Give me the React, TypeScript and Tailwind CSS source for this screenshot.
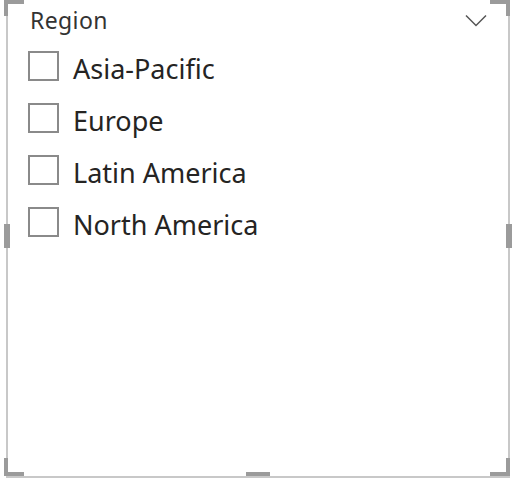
const REGIONS = ["Asia-Pacific", "Europe", "Latin America", "North America"];

/* resize handles that sit on top of the visual's frame */
function Handles() {
  const h = "absolute bg-[#9b9b9b]";
  return (
    <>
      <div className={`${h} left-[-4px] top-[-2px] w-[20px] h-[6px]`} />
      <div className={`${h} left-[-4px] top-[-2px] w-[4px] h-[18px]`} />
      <div className={`${h} right-[-2px] top-[-2px] w-[20px] h-[6px]`} />
      <div className={`${h} right-[-2px] top-[-2px] w-[4px] h-[18px]`} />
      <div className={`${h} left-[-4px] bottom-[0px] w-[20px] h-[4px]`} />
      <div className={`${h} left-[-4px] bottom-[0px] w-[4px] h-[18px]`} />
      <div className={`${h} right-[-2px] bottom-[0px] w-[20px] h-[4px]`} />
      <div className={`${h} right-[-2px] bottom-[0px] w-[4px] h-[18px]`} />
      <div className={`${h} left-[-4px] top-[224px] w-[6px] h-[24px]`} />
      <div className={`${h} right-[-4px] top-[224px] w-[6px] h-[24px]`} />
      <div className={`${h} left-[238px] bottom-[0px] w-[24px] h-[4px]`} />
    </>
  );
}

export default function App() {
  return (
    <div className="w-[516px] h-[478px] bg-white overflow-hidden">
      <div
        className="relative mx-[6px] mt-[-2px] h-[480px] w-[504px] border-2 border-[#c8c8c8] text-[#252423]"
        style={{ fontFamily: '"Noto Sans", "Open Sans", sans-serif' }}
      >
        <Handles />

        {/* header */}
        <div className="flex items-center justify-between pl-[22px] pr-[20px] h-[40px]">
          <span className="text-[23px] leading-none tracking-[0.4px] text-[#333]">Region</span>
          <svg width="22" height="13" viewBox="0 0 22 13" className="mr-[1px]">
            <path d="M1 1.5 L11 11.5 L21 1.5" fill="none" stroke="#555" strokeWidth="1.5" />
          </svg>
        </div>

        {/* options */}
        <div className="flex flex-col gap-[22px] pl-[20px] pt-[11px]">
          {REGIONS.map((r) => (
            <label key={r} className="flex items-center gap-[14px] h-[30px]">
              <span className="w-[31px] h-[30px] border-2 border-[#8a8a8a] bg-white" />
              <span className="text-[27px] leading-none text-[#252423] pt-[5px]">{r}</span>
            </label>
          ))}
        </div>
      </div>
    </div>
  );
}
